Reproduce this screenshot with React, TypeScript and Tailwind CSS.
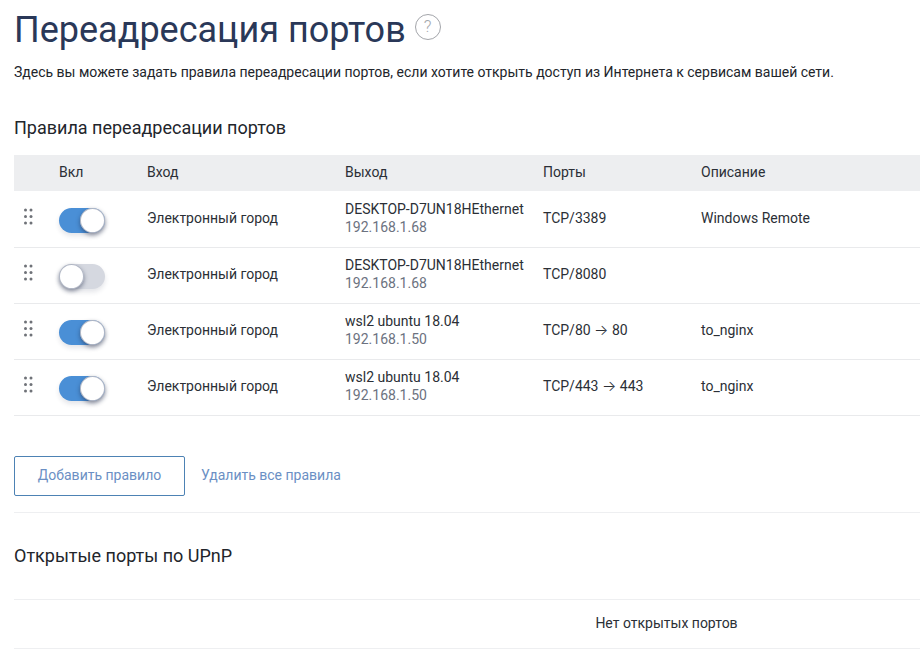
import React from "react";

const rules = [
  { on: true, from: "Электронный город", host: "DESKTOP-D7UN18HEthernet", ip: "192.168.1.68", ports: "TCP/3389", note: "Windows Remote" },
  { on: false, from: "Электронный город", host: "DESKTOP-D7UN18HEthernet", ip: "192.168.1.68", ports: "TCP/8080", note: "" },
  { on: true, from: "Электронный город", host: "wsl2 ubuntu 18.04", ip: "192.168.1.50", ports: "TCP/80", to: "80", note: "to_nginx" },
  { on: true, from: "Электронный город", host: "wsl2 ubuntu 18.04", ip: "192.168.1.50", ports: "TCP/443", to: "443", note: "to_nginx" },
];

function DragHandle() {
  return (
    <svg width="11" height="17" viewBox="0 0 11 17" className="block fill-[#6f7278]">
      <circle cx="2.5" cy="2" r="1.5" />
      <circle cx="8" cy="2" r="1.5" />
      <circle cx="2.5" cy="8.5" r="1.5" />
      <circle cx="8" cy="8.5" r="1.5" />
      <circle cx="2.5" cy="15" r="1.5" />
      <circle cx="8" cy="15" r="1.5" />
    </svg>
  );
}

function Toggle({ on }: { on: boolean }) {
  return (
    <div className={`mt-[4px] flex h-[25px] w-[46px] rounded-full shadow-[0_3px_5px_rgba(30,40,70,0.12)] ${on ? "justify-end bg-[#4a8fd6]" : "justify-start bg-[#d5d8e0]"}`}>
      <div className="h-[25px] w-[25px] rounded-full bg-white shadow-[inset_0_0_0_1px_rgba(60,75,110,0.4),0_2px_4px_rgba(30,40,70,0.5)]" />
    </div>
  );
}

export default function App() {
  return (
    <div className="h-[656px] w-[920px] overflow-hidden bg-white font-['Roboto',sans-serif] text-[14px] text-[#2b2f36]">
      <div className="w-[1319px] pl-[14px]">
        {/* Header */}
        <div className="flex h-[60px] items-center gap-[9px]">
          <h1 className="text-[36px] leading-[60px] font-normal text-[#2a3858]">Переадресация портов</h1>
          <div className="mb-[6px] flex h-[26px] w-[26px] items-center justify-center rounded-full border border-[#a3a5aa] text-[17px] font-light text-[#a5a8ad]">
            ?
          </div>
        </div>
        <p className="mt-[2px] text-[14px] leading-5 text-[#22252b]">
          Здесь вы можете задать правила переадресации портов, если хотите открыть доступ из Интернета к сервисам вашей сети.
        </p>

        <h2 className="mt-[34px] text-[18px] leading-6 text-[#22252b]">Правила переадресации портов</h2>

        {/* Rules table */}
        <div className="mt-[15px] flex h-9 items-center bg-[#edeef0] pb-[2px]">
          <div className="w-[45px]" />
          <div className="w-[88px]">Вкл</div>
          <div className="w-[198px]">Вход</div>
          <div className="w-[198px]">Выход</div>
          <div className="w-[158px]">Порты</div>
          <div>Описание</div>
        </div>
        <div className="pt-[1px]">
          {rules.map((r, i) => (
            <div key={i} className="flex h-[56px] items-center border-b border-[#e9eaec] pb-[2px]">
              <div className="w-[45px] pb-[4px] pl-[9px]">
                <DragHandle />
              </div>
              <div className="w-[88px]">
                <Toggle on={r.on} />
              </div>
              <div className="w-[198px]">{r.from}</div>
              <div className="mb-[1px] w-[198px] leading-[18px]">
                <div>{r.host}</div>
                <div className="text-[#6c7280]">{r.ip}</div>
              </div>
              <div className="w-[158px]">
                {r.ports}
                {r.to && (
                  <>
                    {" "}
                    <span className="font-['Inter',sans-serif] text-[15px] leading-none font-light">→</span> {r.to}
                  </>
                )}
              </div>
              <div>{r.note}</div>
            </div>
          ))}
        </div>

        {/* Actions */}
        <div className="mt-[40px] flex items-center gap-4 border-b border-[#eeeff1] pb-4">
          <button className="h-10 w-[171px] rounded-[2px] border border-[#4d82b4] pb-[1px] text-[14px] text-[#6b8fc4]">Добавить правило</button>
          <button className="pb-[1px] text-[14px] text-[#6b8fc4]">Удалить все правила</button>
        </div>

        <h2 className="mt-[31px] text-[18px] leading-6 text-[#22252b]">Открытые порты по UPnP</h2>

        <div className="mt-[31px] flex h-[50px] items-center justify-center border-y border-[#eeeff1] pb-[1px]">Нет открытых портов</div>
      </div>
    </div>
  );
}
